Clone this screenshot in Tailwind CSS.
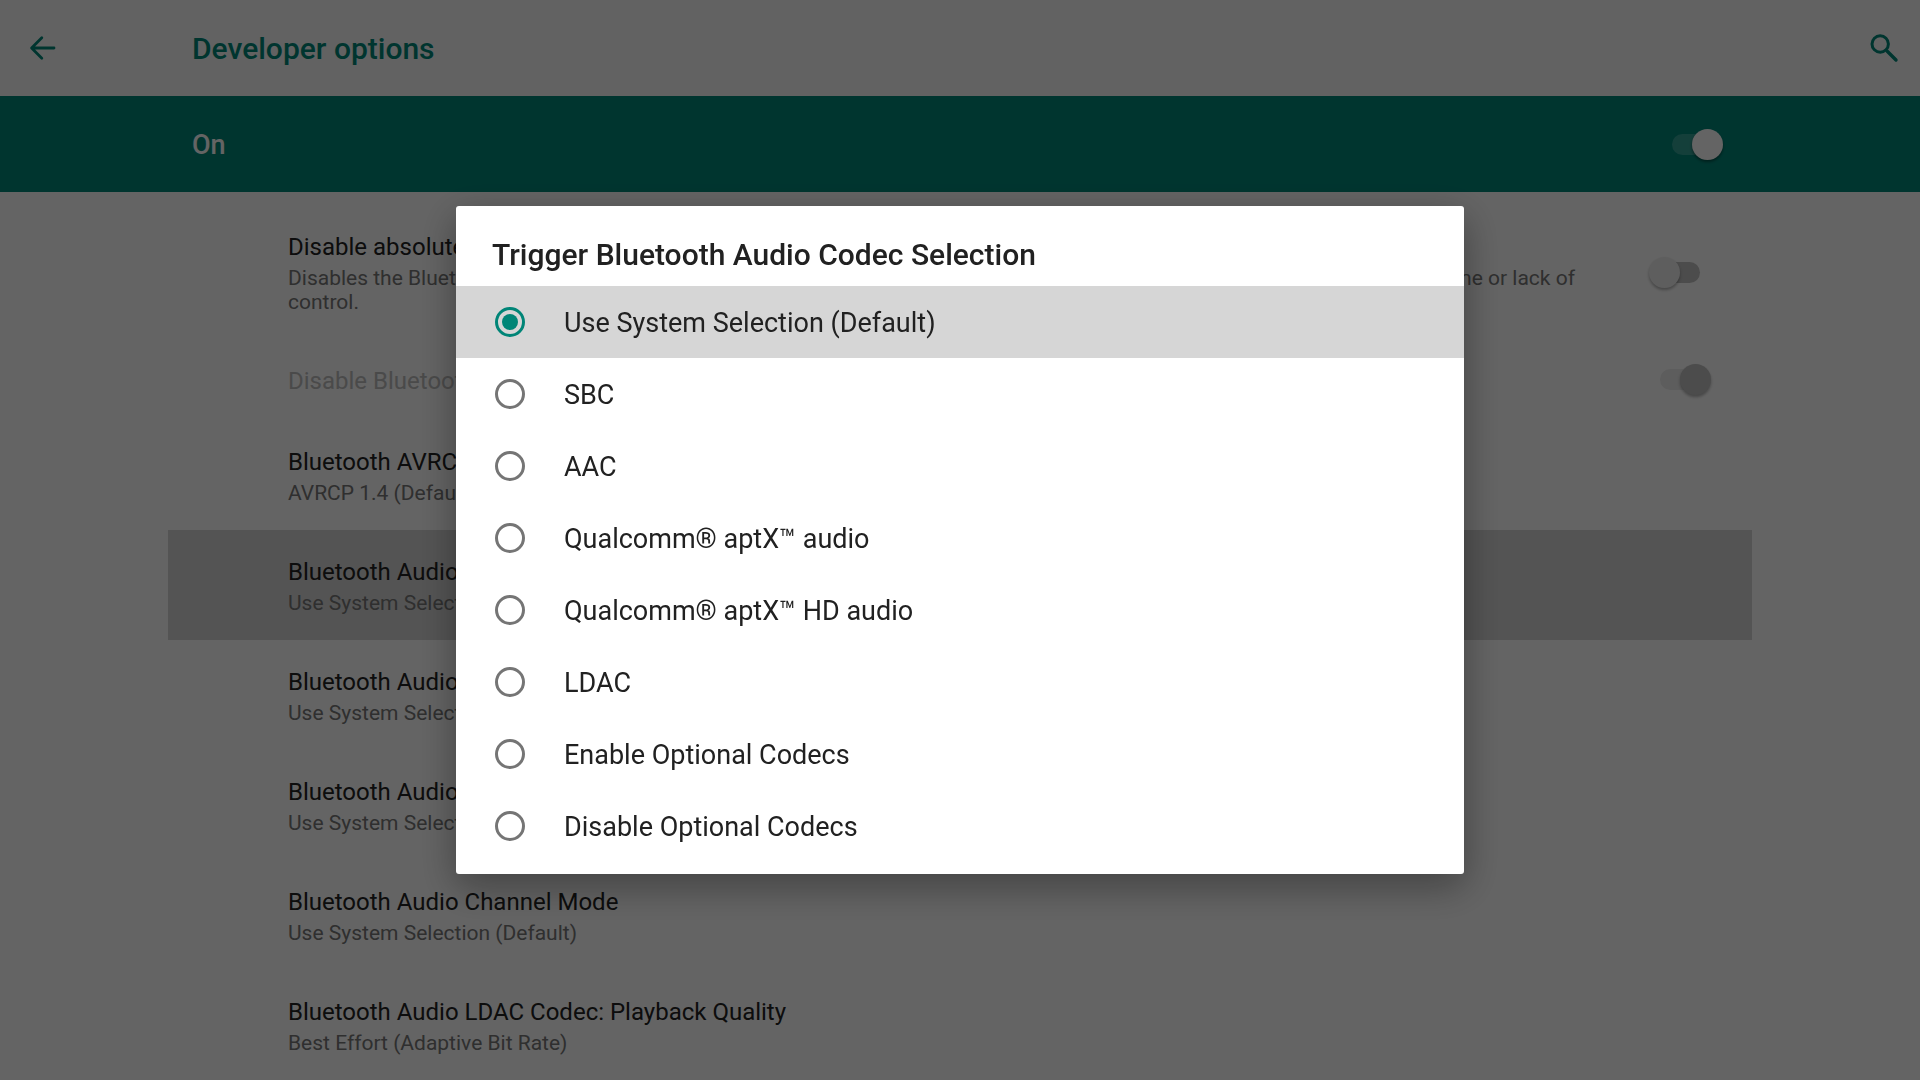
<!DOCTYPE html>
<html lang="en">
<head>
  <meta charset="UTF-8" />
  <meta name="viewport" content="width=device-width, initial-scale=1.0" />
  <title>Developer options</title>
  <script src="https://cdn.jsdelivr.net/npm/@tailwindcss/browser@4"></script>
</head>
<body class="flex h-screen flex-col overflow-hidden bg-[#fafafa] font-['Roboto',sans-serif] text-[#212121]">

  <!-- App bar -->
  <header class="flex h-24 shrink-0 items-center bg-[#f5f5f5] pl-6 pr-[18px] text-[#008577]">
    <button type="button" aria-label="Back" class="mr-[132px]">
      <svg class="size-9" viewBox="0 0 36 36" fill="none" stroke="currentColor" stroke-width="2.8" stroke-linecap="round" stroke-linejoin="round">
        <path d="M30 18H8M17.8 7.8 7.6 18l10.2 10.2" />
      </svg>
    </button>
    <h1 class="text-[30px] font-medium">Developer options</h1>
    <button type="button" aria-label="Search" class="ml-auto">
      <svg class="size-9" viewBox="0 0 36 36" fill="none" stroke="currentColor" stroke-width="3" stroke-linecap="round">
        <circle cx="14.2" cy="14" r="8.2" />
        <path d="m21 21 9 9" stroke-width="3.4" />
      </svg>
    </button>
  </header>

  <!-- Master switch -->
  <div class="flex h-24 shrink-0 items-center justify-between bg-[#008577] pl-48 pr-52 text-[#fafafa]">
    <label for="dev-on" class="pt-0.5 text-[27px] font-medium">On</label>
    <input id="dev-on" type="checkbox" checked class="relative h-[21px] w-10 appearance-none rounded-full bg-white/20 before:absolute before:-top-[5px] before:-left-[11px] before:size-[31px] before:rounded-full before:bg-[#fafafa] before:shadow-[0_2px_3px_rgba(0,0,0,0.4)] checked:before:left-5" />
  </div>

  <!-- Preference list -->
  <main class="mx-[168px] flex-1 overflow-hidden pt-3">
    <div class="flex items-center justify-between pt-[27px] pb-[25px] pl-[120px] pr-[52px]">
      <div class="max-w-[1320px]">
        <label for="abs-volume" class="block text-2xl/8">Disable absolute volume</label>
        <p class="mt-[3px] text-[21px]/6 text-[#757575]">Disables the Bluetooth absolute volume feature in case of volume issues with remote devices such as unacceptably loud volume or lack of control.</p>
      </div>
      <input id="abs-volume" type="checkbox" class="relative h-[21px] w-10 shrink-0 appearance-none rounded-full bg-[#bdbdbd] before:absolute before:-top-[5px] before:-left-[11px] before:size-[31px] before:rounded-full before:bg-[#ececec] before:shadow-[0_2px_3px_rgba(0,0,0,0.3)] checked:before:left-5" />
    </div>
    <div class="flex h-[81px] items-center justify-between pl-[120px] pr-[52px]">
      <label for="a2dp-offload" class="pt-0.5 text-2xl/8 text-[#b9b9b9]">Disable Bluetooth A2DP hardware offload</label>
      <input id="a2dp-offload" type="checkbox" checked disabled class="relative h-[21px] w-10 appearance-none rounded-full bg-[#e8e8e8] before:absolute before:-top-[5px] before:-left-[11px] before:size-[31px] before:rounded-full before:bg-[#bdbdbd] before:shadow-[0_2px_3px_rgba(0,0,0,0.3)] checked:before:left-5" />
    </div>
    <button type="button" class="block w-full pt-[26px] pb-[25px] pl-[120px] text-left">
      <span class="block text-2xl/8">Bluetooth AVRCP Version</span>
      <span class="mt-[3px] block text-[21px]/6 text-[#757575]">AVRCP 1.4 (Default)</span>
    </button>
    <button type="button" class="block w-full bg-[#d2d2d2] pt-[26px] pb-[25px] pl-[120px] text-left">
      <span class="block text-2xl/8">Bluetooth Audio Codec</span>
      <span class="mt-[3px] block text-[21px]/6 text-[#757575]">Use System Selection (Default)</span>
    </button>
    <button type="button" class="block w-full pt-[26px] pb-[25px] pl-[120px] text-left">
      <span class="block text-2xl/8">Bluetooth Audio Sample Rate</span>
      <span class="mt-[3px] block text-[21px]/6 text-[#757575]">Use System Selection (Default)</span>
    </button>
    <button type="button" class="block w-full pt-[26px] pb-[25px] pl-[120px] text-left">
      <span class="block text-2xl/8">Bluetooth Audio Bits Per Sample</span>
      <span class="mt-[3px] block text-[21px]/6 text-[#757575]">Use System Selection (Default)</span>
    </button>
    <button type="button" class="block w-full pt-[26px] pb-[25px] pl-[120px] text-left">
      <span class="block text-2xl/8">Bluetooth Audio Channel Mode</span>
      <span class="mt-[3px] block text-[21px]/6 text-[#757575]">Use System Selection (Default)</span>
    </button>
    <button type="button" class="block w-full pt-[26px] pb-[25px] pl-[120px] text-left">
      <span class="block text-2xl/8">Bluetooth Audio LDAC Codec: Playback Quality</span>
      <span class="mt-[3px] block text-[21px]/6 text-[#757575]">Best Effort (Adaptive Bit Rate)</span>
    </button>
  </main>

  <!-- Codec dialog -->
  <div class="fixed inset-0 flex items-center justify-center bg-black/60">
    <div role="dialog" aria-modal="true" aria-labelledby="codec-title" class="w-full max-w-[1008px] rounded-[3px] bg-white pb-3 shadow-[0_12px_38px_rgba(0,0,0,0.36)]">
      <h2 id="codec-title" class="px-9 pt-[29px] pb-[11px] text-[30px]/10 font-medium">Trigger Bluetooth Audio Codec Selection</h2>
      <div role="radiogroup" aria-labelledby="codec-title" class="text-[27px]">
        <label class="flex h-18 items-center gap-[39px] bg-[#d6d6d6] pl-[39px]">
          <input type="radio" name="codec" checked class="grid size-[30px] appearance-none place-items-center rounded-full border-3 border-[#757575] checked:border-[#008577] checked:before:size-4 checked:before:rounded-full checked:before:bg-[#008577]" />
          <span class="pt-0.5">Use System Selection (Default)</span>
        </label>
        <label class="flex h-18 items-center gap-[39px] pl-[39px]">
          <input type="radio" name="codec" class="grid size-[30px] appearance-none place-items-center rounded-full border-3 border-[#757575] checked:border-[#008577] checked:before:size-4 checked:before:rounded-full checked:before:bg-[#008577]" />
          <span class="pt-0.5">SBC</span>
        </label>
        <label class="flex h-18 items-center gap-[39px] pl-[39px]">
          <input type="radio" name="codec" class="grid size-[30px] appearance-none place-items-center rounded-full border-3 border-[#757575] checked:border-[#008577] checked:before:size-4 checked:before:rounded-full checked:before:bg-[#008577]" />
          <span class="pt-0.5">AAC</span>
        </label>
        <label class="flex h-18 items-center gap-[39px] pl-[39px]">
          <input type="radio" name="codec" class="grid size-[30px] appearance-none place-items-center rounded-full border-3 border-[#757575] checked:border-[#008577] checked:before:size-4 checked:before:rounded-full checked:before:bg-[#008577]" />
          <span class="pt-0.5">Qualcomm® aptX™ audio</span>
        </label>
        <label class="flex h-18 items-center gap-[39px] pl-[39px]">
          <input type="radio" name="codec" class="grid size-[30px] appearance-none place-items-center rounded-full border-3 border-[#757575] checked:border-[#008577] checked:before:size-4 checked:before:rounded-full checked:before:bg-[#008577]" />
          <span class="pt-0.5">Qualcomm® aptX™ HD audio</span>
        </label>
        <label class="flex h-18 items-center gap-[39px] pl-[39px]">
          <input type="radio" name="codec" class="grid size-[30px] appearance-none place-items-center rounded-full border-3 border-[#757575] checked:border-[#008577] checked:before:size-4 checked:before:rounded-full checked:before:bg-[#008577]" />
          <span class="pt-0.5">LDAC</span>
        </label>
        <label class="flex h-18 items-center gap-[39px] pl-[39px]">
          <input type="radio" name="codec" class="grid size-[30px] appearance-none place-items-center rounded-full border-3 border-[#757575] checked:border-[#008577] checked:before:size-4 checked:before:rounded-full checked:before:bg-[#008577]" />
          <span class="pt-0.5">Enable Optional Codecs</span>
        </label>
        <label class="flex h-18 items-center gap-[39px] pl-[39px]">
          <input type="radio" name="codec" class="grid size-[30px] appearance-none place-items-center rounded-full border-3 border-[#757575] checked:border-[#008577] checked:before:size-4 checked:before:rounded-full checked:before:bg-[#008577]" />
          <span class="pt-0.5">Disable Optional Codecs</span>
        </label>
      </div>
    </div>
  </div>

</body>
</html>
